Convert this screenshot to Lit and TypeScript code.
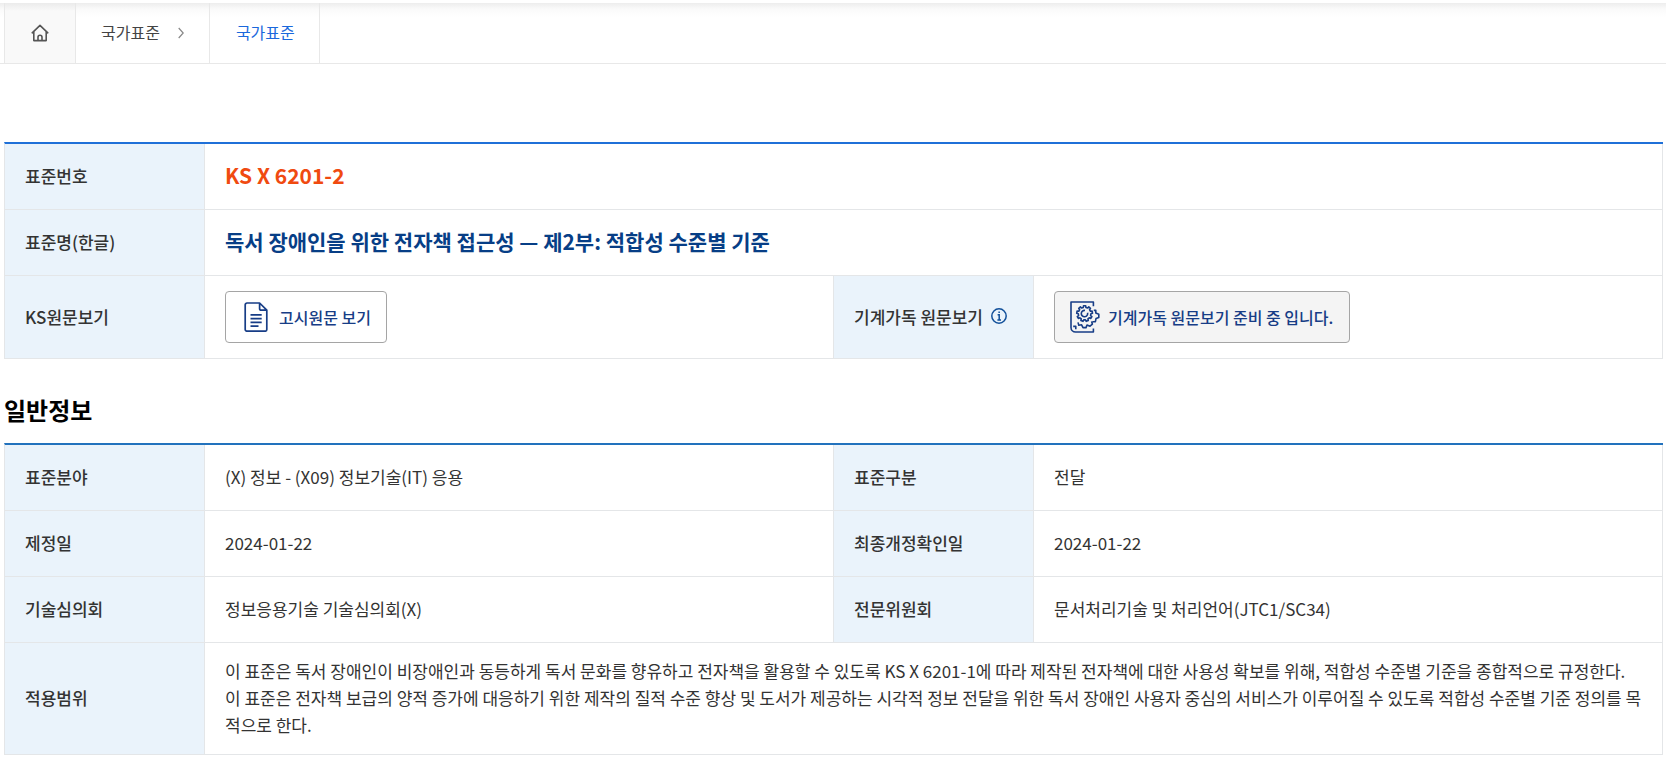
import { LitElement, html, css, svg, nothing, type TemplateResult } from "lit";
import { customElement } from "lit/decorators.js";

interface Pair {
  label: string;
  value: string | string[];
}

const homeIcon = html`<svg class="home-icon" viewBox="0 0 18 18" width="18" height="18" fill="none" stroke="currentColor" stroke-width="1.6" stroke-linecap="round" stroke-linejoin="round" aria-hidden="true">
  <path d="M1.2 8.800 9 1.400l7.800 7.400M2.800 7.600v9h12.400v-9M7 16.400v-3.200a2 2 0 0 1 4 0v3.200" />
</svg>`;

const chevronIcon = html`<svg class="chevron" viewBox="0 0 6 12" width="6" height="12" fill="none" stroke="currentColor" stroke-width="1.2" aria-hidden="true">
  <path d="M.7 1 5.2 6 .7 11" />
</svg>`;

const documentIcon = html`<svg viewBox="0 0 24 30" width="24" height="30" fill="none" stroke="currentColor" stroke-width="1.7" stroke-linejoin="round" aria-hidden="true">
  <path d="M15.6 1H3a1.8 1.8 0 0 0-1.8 1.8v24.6A1.8 1.8 0 0 0 3 29.2h18a1.8 1.8 0 0 0 1.8-1.8V8.2ZM15.6 1v5.4a1.8 1.8 0 0 0 1.8 1.8h5.4" />
  <path d="M6.5 12.8h11.2M6.5 16.6h11.2M6.5 20.4h11.2M6.5 24.2h8" />
</svg>`;

const gearPath = (cx: number, cy: number, inner: number, outer: number, teeth: number): string => {
  const step = (Math.PI * 2) / teeth;
  const at = (r: number, a: number) => `${(cx + r * Math.cos(a)).toFixed(2)} ${(cy + r * Math.sin(a)).toFixed(2)}`;
  let d = "";
  for (let i = 0; i < teeth; i++) {
    const a = i * step - Math.PI / 2;
    d += `${i ? "L" : "M"}${at(inner, a - step * 0.3)}L${at(outer, a - step * 0.2)}L${at(outer, a + step * 0.2)}L${at(inner, a + step * 0.3)}`;
  }
  return d + "Z";
};

const machineIcon = html`<svg viewBox="0 0 30 32" width="30" height="32" fill="none" stroke="currentColor" stroke-width="1.6" stroke-linejoin="round" aria-hidden="true">
  <path d="M23.4 5.200V1H1v25.400a4.600 4.600 0 0 0 4.600 4.600h17.800v-3.600M3.200 25.400h2.600v2.800" />
  ${svg`<path d=${gearPath(14.6, 12.6, 6.3, 7.9, 9)} />`}
  <path d="M17.6 11.800a3.200 3.200 0 1 1-2.600-2.400" />
  <path d="M23.8 9.400h2v2.600l3 1.200v3.400l-2.800 1-.6 3-2.800.2M8 21.400l.8 2.800 2.800-.4 1.400 2.800h3l1-2.600 3 1.200 2.400-2-.8-2.800" />
</svg>`;

const infoIcon = html`<svg viewBox="0 0 16 16" width="16" height="16" fill="none" stroke="currentColor" stroke-width="1.5" aria-hidden="true">
  <circle cx="8" cy="8" r="7.2" />
  <path d="M6.6 6.8h1.6v5M6.4 12h3.6M7.4 4.3h1.5" />
</svg>`;

@customElement("app-root")
export class AppRoot extends LitElement {
  static styles = css`
    :host {
      display: block;
      color: #333;
      background: #fff;
      font-family: "Noto Sans CJK KR", sans-serif;
      font-size: 17px;
      line-height: 27px;
    }
    * {
      box-sizing: border-box;
    }
    .crumb-bar {
      margin-top: 3px;
      padding-left: 4px;
      border-bottom: 1px solid #e8e8e8;
      background: linear-gradient(#ededed, #fafafa 6px, #fff 14px);
    }
    .crumbs {
      display: flex;
      height: 60px;
      margin: 0;
      padding: 0;
      list-style: none;
      font-family: Roboto, "Noto Sans CJK KR", sans-serif;
      font-size: 16px;
      border-left: 1px solid #e8e8e8;
    }
    .crumb {
      display: flex;
      border-right: 1px solid #e8e8e8;
    }
    .crumb-link {
      display: flex;
      align-items: center;
      gap: 18px;
      padding: 0 25px;
      color: #444;
      text-decoration: none;
    }
    .crumb-link.home {
      padding: 0 26px;
      background: linear-gradient(#ebebeb, #f9f9f9 8px);
    }
    .crumb-link.current {
      padding: 0 24px 0 26px;
      color: #1a68dc;
    }
    .home-icon {
      color: #555;
    }
    .chevron {
      color: #888;
    }
    .content {
      padding: 78px 3px 1px 4px;
    }
    .info-table {
      width: 100%;
      table-layout: fixed;
      border-collapse: separate;
      border-spacing: 0;
      border-top: 2px solid #1f70d8;
      border-left: 1px solid #e4e6e8;
    }
    .info-table.general {
      border-top-color: #2272bd;
    }
    .label-col {
      width: 200px;
    }
    .info-table th,
    .info-table td {
      height: 66px;
      padding: 14px 20px 16px;
      border-right: 1px solid #e4e6e8;
      border-bottom: 1px solid #e4e6e8;
      text-align: left;
      vertical-align: middle;
    }
    .info-table th {
      background: #eaf3fb;
      font-weight: 500;
    }
    .info-table .action-cell {
      padding: 15px 20px;
    }
    .info-table .number {
      color: #f04a10;
      font-size: 21px;
      font-weight: 700;
    }
    .info-table .title {
      color: #073e86;
      font-size: 21px;
      font-weight: 700;
    }
    .action {
      display: flex;
      align-items: center;
      gap: 11px;
      height: 52px;
      padding: 0 15px 0 18px;
      border: 1px solid #a5a5a5;
      border-radius: 4px;
      background: #fff;
      color: #173d86;
      font: inherit;
      font-size: 16px;
      font-weight: 500;
    }
    .action.pending {
      gap: 8px;
      padding: 0 16px 0 15px;
      background: #f4f4f4;
    }
    .with-info {
      display: flex;
      align-items: center;
      gap: 8px;
    }
    .info-button {
      display: flex;
      padding: 0;
      border: 0;
      background: none;
      color: #12509a;
    }
    .section-title {
      margin: 33px 0 16px;
      color: #000;
      font-size: 24px;
      font-weight: 700;
      line-height: 35px;
    }
    .paragraph {
      margin: 0;
    }
  `;

  private rows: Pair[][] = [
    [
      { label: "표준분야", value: "(X) 정보 - (X09) 정보기술(IT) 응용" },
      { label: "표준구분", value: "전달" },
    ],
    [
      { label: "제정일", value: "2024-01-22" },
      { label: "최종개정확인일", value: "2024-01-22" },
    ],
    [
      { label: "기술심의회", value: "정보응용기술 기술심의회(X)" },
      { label: "전문위원회", value: "문서처리기술 및 처리언어(JTC1/SC34)" },
    ],
    [
      {
        label: "적용범위",
        value: [
          "이 표준은 독서 장애인이 비장애인과 동등하게 독서 문화를 향유하고 전자책을 활용할 수 있도록 KS X 6201-1에 따라 제작된 전자책에 대한 사용성 확보를 위해, 적합성 수준별 기준을 종합적으로 규정한다.",
          "이 표준은 전자책 보급의 양적 증가에 대응하기 위한 제작의 질적 수준 향상 및 도서가 제공하는 시각적 정보 전달을 위한 독서 장애인 사용자 중심의 서비스가 이루어질 수 있도록 적합성 수준별 기준 정의를 목적으로 한다.",
        ],
      },
    ],
  ];

  private columns(): TemplateResult {
    return html`<colgroup><col class="label-col" /><col /><col class="label-col" /><col /></colgroup>`;
  }

  private cell(pair: Pair, wide: boolean): TemplateResult {
    const content = Array.isArray(pair.value)
      ? pair.value.map((line) => html`<p class="paragraph">${line}</p>`)
      : pair.value;
    return html`<th scope="row">${pair.label}</th><td colspan=${wide ? "3" : nothing}>${content}</td>`;
  }

  render() {
    return html`
      <nav class="crumb-bar" aria-label="breadcrumb">
        <ol class="crumbs">
          <li class="crumb"><a class="crumb-link home" href="#" aria-label="홈">${homeIcon}</a></li>
          <li class="crumb"><a class="crumb-link" href="#">국가표준 ${chevronIcon}</a></li>
          <li class="crumb"><a class="crumb-link current" href="#" aria-current="page">국가표준</a></li>
        </ol>
      </nav>
      <main class="content">
        <table class="info-table">
          ${this.columns()}
          <tbody>
            <tr><th scope="row">표준번호</th><td class="number" colspan="3">KS X 6201-2</td></tr>
            <tr><th scope="row">표준명(한글)</th><td class="title" colspan="3">독서 장애인을 위한 전자책 접근성 — 제2부: 적합성 수준별 기준</td></tr>
            <tr>
              <th scope="row">KS원문보기</th>
              <td class="action-cell"><button class="action" type="button">${documentIcon}고시원문 보기</button></td>
              <th scope="row">
                <div class="with-info">기계가독 원문보기<button class="info-button" type="button" aria-label="안내">${infoIcon}</button></div>
              </th>
              <td class="action-cell"><button class="action pending" type="button">${machineIcon}기계가독 원문보기 준비 중 입니다.</button></td>
            </tr>
          </tbody>
        </table>
        <h2 class="section-title">일반정보</h2>
        <table class="info-table general">
          ${this.columns()}
          <tbody>
            ${this.rows.map((row) => html`<tr>${row.map((pair) => this.cell(pair, row.length === 1))}</tr>`)}
          </tbody>
        </table>
      </main>
    `;
  }
}
